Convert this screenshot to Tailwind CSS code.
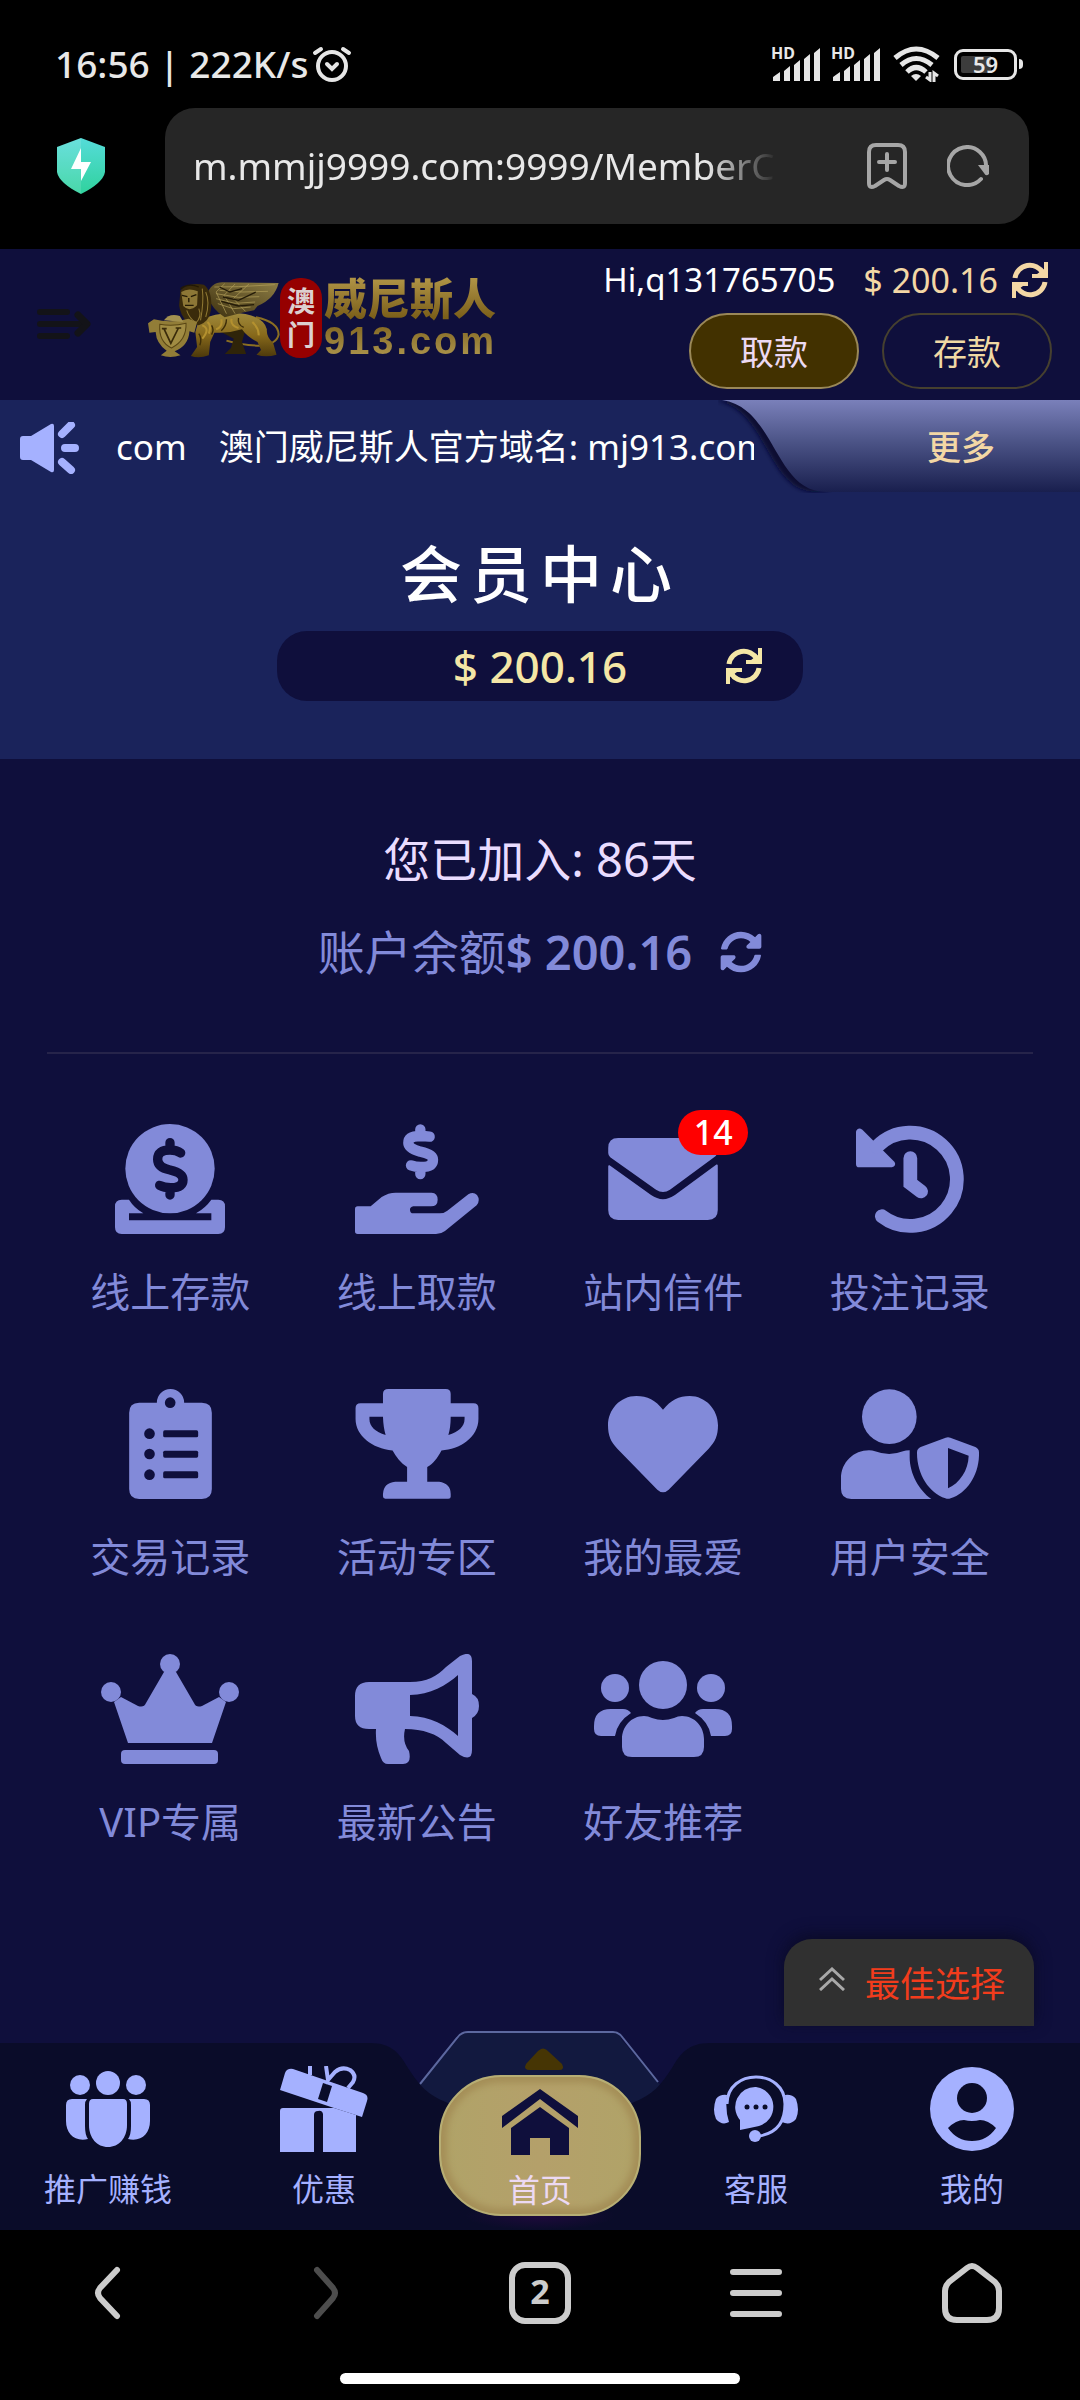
<!DOCTYPE html>
<html lang="zh-CN">
<head>
<meta charset="utf-8">
<meta name="viewport" content="width=device-width, initial-scale=1">
<title>会员中心</title>
<script src="https://cdn.jsdelivr.net/npm/@tailwindcss/browser@4"></script>
</head>
<body class="flex min-h-screen flex-col bg-[#0f0f3c] font-['Noto_Sans','Noto_Sans_CJK_SC',sans-serif] text-white">

<svg class="hidden" aria-hidden="true">
  <symbol id="sync-sharp" viewBox="0 0 36 36">
    <path d="M3 16A15 15 0 0 1 31 11M33 20A15 15 0 0 1 5 25" fill="none" stroke="currentColor" stroke-width="5"/>
    <path d="M32 0H36V16H20V12H25L32 7ZM4 36H0V20H16V24H11L4 29Z" fill="currentColor"/>
  </symbol>
  <symbol id="signal" viewBox="0 0 50 34">
    <path d="M2 34V30L9 25V34ZM13 34V24L19 19V34ZM23 34V18L29 13V34ZM33 34V12L39 7V34ZM43 34V6L49 1V34Z" fill="#e6e6e6"/>
  </symbol>
</svg>

<!-- Browser chrome: status bar and address bar -->
<header class="bg-black pb-[25px] text-[#e8e8e8]">
  <div class="flex items-center justify-between pt-9 pr-[57px] pb-4 pl-[55px]">
    <div class="flex items-center gap-1">
      <span class="text-[37px] leading-[56px] font-medium whitespace-nowrap">16:56 | 222K/s</span>
      <svg class="h-9 w-10" viewBox="0 0 40 36" fill="none" stroke="#e6e6e6" stroke-width="4" stroke-linecap="round"><circle cx="20" cy="20" r="14"/><path d="M15 18L20 23L25 18M3 7L9 3M37 7L31 3"/></svg>
    </div>
    <div class="flex items-center">
      <div class="relative mr-2.5 h-[34px] w-[50px]"><svg class="h-full w-full"><use href="#signal"/></svg><span class="absolute top-[-4px] left-0 text-base leading-5 font-bold">HD</span></div>
      <div class="relative mr-3 h-[34px] w-[50px]"><svg class="h-full w-full"><use href="#signal"/></svg><span class="absolute top-[-4px] left-0 text-base leading-5 font-bold">HD</span></div>
      <svg class="mr-3.5 h-9 w-[47px]" viewBox="0 0 47 36" fill="none" stroke="#e6e6e6" stroke-width="5"><path d="M2 12Q23 -6 45 12M8 19Q23 6 39 19M14 26Q23 17 33 26"/><path d="M18 30Q23 26 28 30L23 35Z" fill="#e6e6e6" stroke="none"/><path d="M37 26V34L33 31M41 36V27L45 30" stroke-width="3"/></svg>
      <div class="flex h-[31px] w-[63px] items-center justify-center rounded-[9px] border-3 border-[#e6e6e6] bg-linear-to-r from-[#3c3c3c] from-60% to-black to-60% bg-clip-content p-1 text-[22px] leading-[22px] font-semibold">59</div>
      <div class="ml-0.5 h-2.5 w-1 rounded-r bg-[#e6e6e6]"></div>
    </div>
  </div>
  <div class="flex items-center pr-[51px] pl-[57px]">
    <svg class="mr-[60px] h-14 w-12 shrink-0" viewBox="0 0 48 56">
      <defs><linearGradient id="shield" x1="0" y1="0" x2="0" y2="1"><stop offset="0" stop-color="#55dcd9"/><stop offset="1" stop-color="#30d29d"/></linearGradient></defs>
      <path d="M24 0L48 9V34Q46 45 24 56Q2 45 0 34V9Z" fill="url(#shield)"/>
      <path d="M24 0L0 9V34Q2 45 24 56Z" fill="#fff" opacity=".12"/>
      <path d="M24 10L14 31H24V43L34 24H24Z" fill="#fff"/>
    </svg>
    <div class="flex h-[116px] min-w-0 flex-1 items-center rounded-[30px] bg-[#262626] pr-10 pl-7">
      <input type="text" aria-label="网址" value="m.mmjj9999.com:9999/MemberCenter" class="mr-[90px] min-w-0 flex-1 bg-transparent text-[37px] leading-[60px] outline-none [mask-image:linear-gradient(to_right,#000_88%,transparent)]">
      <button type="button" aria-label="添加书签" class="mr-10"><svg class="h-[46px] w-10" viewBox="0 0 40 46" fill="none" stroke="#a6a6a6" stroke-width="4" stroke-linecap="round" stroke-linejoin="round"><path d="M9 2H31Q38 2 38 9V40Q38 46 32 43L23 37Q20 35 17 37L8 43Q2 46 2 40V9Q2 2 9 2ZM20 11V27M12 19H28"/></svg></button>
      <button type="button" aria-label="刷新"><svg class="h-[42px] w-[42px]" viewBox="0 0 42 42"><path d="M34 34A19 19 0 1 1 39 23" fill="none" stroke="#a6a6a6" stroke-width="4" stroke-linecap="round"/><path d="M31 20H42V29Q39 32 37 28Z" fill="#a6a6a6"/></svg></button>
    </div>
  </div>
</header>

<!-- Site header -->
<div class="flex items-start justify-between pr-7 pl-[37px]">
  <div class="flex items-start">
    <button type="button" aria-label="菜单" class="mt-[59px] mr-14"><svg class="h-8 w-[54px]" viewBox="0 0 54 32" fill="none" stroke="#131318" stroke-width="6" stroke-linecap="round" stroke-linejoin="round"><path d="M3 4H30M3 16H48M3 28H30"/><path d="M41 7L50 16L41 25" stroke-width="7"/></svg></button>
    <a href="#" aria-label="澳门威尼斯人 913.com" class="mt-[27px] flex items-center">
      <svg class="h-20 w-[133px]" viewBox="425 108 385 240" preserveAspectRatio="none">
        <defs>
          <linearGradient id="gold" x1="0" y1="0" x2="0" y2="1"><stop offset="0" stop-color="#a08a3c"/><stop offset=".5" stop-color="#87691b"/><stop offset="1" stop-color="#4c380b"/></linearGradient>
          <linearGradient id="wing" x1="1" y1="0" x2="0" y2="1"><stop offset="0" stop-color="#8d7d45"/><stop offset="1" stop-color="#3d300f"/></linearGradient>
        </defs>
        <path d="M740 226Q806 240 806 278Q800 308 750 311Q700 310 655 296" fill="none" stroke="#8b6f22" stroke-width="6"/>
        <path d="M655 240L715 245L700 300L712 336H650L668 318L676 290L640 270Z" fill="#2f2409"/>
        <path d="M575 235Q640 205 710 216Q765 228 772 262Q770 285 790 302L800 338Q770 348 742 338L755 324L745 300Q715 285 700 262Q660 275 620 272L608 300L604 340Q575 350 552 342L570 315L565 270Z" fill="url(#gold)"/>
        <path d="M598 160Q610 120 645 121L806 123Q795 170 745 192L735 205L700 212L650 226Q615 205 598 160Z" fill="url(#wing)"/>
        <path d="M620 135L690 134L795 128M635 145L700 150L775 148M625 155L690 166L750 164M625 170L680 184L738 180M630 185L675 200L725 195M650 125L625 150L655 215M680 126L648 160L680 215M720 126L675 170L710 208" fill="none" stroke="#b3a05a" stroke-width="2"/>
        <path d="M635 135L665 150L700 140M645 165L690 175L740 150M640 178L690 192L735 188" fill="none" stroke="#241b08" stroke-width="4"/>
        <path d="M522 145Q545 120 590 128Q616 150 610 205Q605 240 575 250L540 240Q520 215 518 190Z" fill="#3a2b0b"/>
        <path d="M540 205Q548 230 565 240M595 150Q608 180 595 225M585 140Q590 180 580 235M575 200Q585 225 565 245" stroke="#8f7833" stroke-width="3" fill="none"/>
        <path d="M524 150Q545 136 572 148L570 190Q548 212 530 192Z" fill="#8d7736"/>
        <path d="M526 160L542 164M552 164L568 158M535 190H560M546 168V181M522 140Q545 122 575 135" stroke="#221905" stroke-width="4" fill="none"/>
        <path d="M640 232Q645 255 625 262M670 230Q665 250 690 258M585 250Q610 260 585 290M600 240Q612 250 604 275M730 240Q750 260 748 280" stroke="#b4912f" stroke-width="6" fill="none"/>
        <path d="M655 232Q655 252 640 266M690 228Q686 248 705 256M612 250Q620 262 612 278M575 275Q585 290 578 310" stroke="#3d2d08" stroke-width="4" fill="none"/>
        <path d="M445 232Q495 245 545 230L570 240L562 272L548 268Q545 312 505 328L522 340Q492 350 465 340L482 326Q452 305 450 270L432 272L428 244Z" fill="#927d37"/>
        <path d="M462 247Q500 254 538 244Q540 295 496 318Q458 300 462 247Z" fill="#a18c43" stroke="#594614" stroke-width="3"/>
        <path d="M474 260L494 304L516 258M468 260H482M508 258H524" fill="none" stroke="#3a2b0a" stroke-width="5"/>
        <path d="M474 235Q490 212 520 222L530 240Z" fill="#a39150"/>
      </svg>
      <span class="flex h-20 w-[42px] flex-col items-center justify-center rounded-[20px] bg-[#960000] text-[28px] leading-[34px] font-bold text-[#dcd0d0]"><span>澳</span><span>门</span></span>
      <span class="ml-0.5 flex flex-col bg-linear-to-b from-[#b39748] via-[#7b5f19] to-[#b09950] bg-clip-text text-transparent">
        <span class="text-[43px] leading-[46px] font-black">威尼斯人</span>
        <span class="font-['Liberation_Sans',sans-serif] text-[38px] leading-[38px] font-bold tracking-[3px]">913.com</span>
      </span>
    </a>
  </div>
  <div class="flex flex-col items-end gap-2.5 pt-2 pb-[11px]">
    <div class="flex h-[46px] items-center pr-1 text-[34px] whitespace-nowrap">
      <span class="mr-7 text-[33px]">Hi,q131765705</span>
      <span class="mr-3.5 text-[#f3d7a5]">$ 200.16</span>
      <button type="button" aria-label="刷新余额" class="text-[#f3d7a5]"><svg class="h-9 w-9"><use href="#sync-sharp"/></svg></button>
    </div>
    <div class="flex gap-[23px] text-[34px]">
      <button type="button" class="h-[76px] w-[170px] rounded-full border-2 border-[#9a8858] bg-[#423100] pt-0.5 text-[#ecd9f3]">取款</button>
      <button type="button" class="h-[76px] w-[170px] rounded-full border-2 border-[#46402f] pt-0.5 text-[#f0d9a4]">存款</button>
    </div>
  </div>
</div>

<section class="bg-[#1a235b] pb-[58px]">
  <!-- Scrolling notice -->
  <div class="flex h-[93px] items-stretch">
    <div class="flex min-w-0 flex-1 items-center pt-0.5 pl-5">
      <svg class="mr-9 h-[52px] w-[60px] shrink-0" viewBox="0 0 60 52"><path d="M3 14H11L31 2Q34 1 34 4V48Q34 51 31 50L11 38H3Q0 38 0 35V17Q0 14 3 14Z" fill="#a5b1ff"/><path d="M42 12L51 3M45 26H55M42 40L51 48" stroke="#a5b1ff" stroke-width="8" stroke-linecap="round"/></svg>
      <div class="flex min-w-0 flex-1 gap-8 overflow-hidden text-[35px] whitespace-nowrap"><span>com</span><span>澳门威尼斯人官方域名: mj913.com</span></div>
    </div>
    <a href="#" class="relative -ml-9 flex w-[362px] items-center justify-end pt-0.5 pr-[85px] text-[34px] font-medium text-[#f3d7a5]">
      <svg class="absolute inset-0 h-full w-full" viewBox="0 0 362 93" preserveAspectRatio="none">
        <defs>
          <linearGradient id="more" x1="0" y1="0" x2="0" y2="1"><stop offset="0" stop-color="#7a80ba"/><stop offset=".45" stop-color="#4c5487"/><stop offset="1" stop-color="#191f4e"/></linearGradient>
          <filter id="soft" x="-10%" y="-10%" width="120%" height="120%"><feGaussianBlur stdDeviation="2"/></filter>
        </defs>
        <path d="M-4 0C50 8 48 90 96 92L112 91C78 70 66 8 10 0Z" fill="#080a30" filter="url(#soft)"/>
        <path d="M4 0C58 8 56 92 108 92H362V0Z" fill="url(#more)"/>
      </svg>
      <span class="relative">更多</span>
    </a>
  </div>
  <h1 class="mt-[41px] text-center text-[62px] leading-[80px] font-medium tracking-[8px]">会员中心</h1>
  <div class="mx-auto mt-[17px] grid h-[70px] w-[526px] grid-cols-[1fr_auto_1fr] items-center rounded-[30px] bg-[#0f0f3c] text-[44px] font-medium text-[#f4e6a6]">
    <span></span>
    <span class="leading-[60px]">$ 200.16</span>
    <button type="button" aria-label="刷新余额" class="mr-[41px] justify-self-end"><svg class="h-9 w-9"><use href="#sync-sharp"/></svg></button>
  </div>
</section>

<main class="flex flex-1 flex-col">
  <div class="mx-[47px] flex flex-col items-center gap-[33px] border-b-2 border-[#26244a] pt-[70px] pb-[70px] text-[47px] leading-[60px]">
    <p class="text-[#e9dcff]">您已加入: 86天</p>
    <p class="flex items-center text-[#828ad9]">账户余额<span class="font-semibold">$ 200.16</span>
      <button type="button" aria-label="刷新余额" class="ml-7"><svg class="h-[42px] w-[42px]" viewBox="0 0 512 512" fill="currentColor"><path d="M370.72 133.28C339.458 104.008 298.888 87.962 255.848 88c-77.458.068-144.328 53.178-162.791 126.85-1.344 5.363-6.122 9.15-11.651 9.15H24.103c-7.498 0-13.194-6.807-11.807-14.176C33.933 94.924 134.813 8 256 8c66.448 0 126.791 26.136 171.315 68.685L463.03 40.97C478.149 25.851 504 36.559 504 57.941V192c0 13.255-10.745 24-24 24H345.941c-21.382 0-32.09-25.851-16.971-40.971l41.75-41.749zM32 296h134.059c21.382 0 32.09 25.851 16.971 40.971l-41.75 41.75c31.262 29.273 71.835 45.319 114.876 45.28 77.418-.07 144.315-53.144 162.787-126.849 1.344-5.363 6.122-9.15 11.651-9.15h57.304c7.498 0 13.194 6.807 11.807 14.176C478.067 417.076 377.187 504 256 504c-66.448 0-126.791-26.136-171.315-68.685L48.97 471.03C33.851 486.149 8 475.441 8 454.059V320c0-13.255 10.745-24 24-24z"/></svg></button>
    </p>
  </div>

  <nav aria-label="会员功能" class="mx-[47px] mt-[70px] grid grid-cols-4 gap-y-[73px] text-center text-[40px] leading-[48px] text-[#828ad9]">
    <a href="#" class="flex flex-col items-center gap-[34px]">
      <svg class="h-[110px] w-[110px]" viewBox="165 101 330 330" fill="currentColor"><circle cx="330" cy="235" r="134"/><path d="M185 328H207Q222 352 250 369H207V390H454V369H408Q437 352 454 328H475Q495 328 495 348V411Q495 431 475 431H185Q165 431 165 411V348Q165 328 185 328Z"/><path d="M362 188Q350 179 330 179Q293 179 293 207Q293 232 330 239Q369 248 369 268Q369 292 332 292Q312 292 299 285M330 157V179M330 292V314" fill="none" stroke="#0f0f3c" stroke-width="28" stroke-linecap="round"/></svg>
      <span>线上存款</span></a>
    <a href="#" class="flex flex-col items-center gap-[34px]">
      <svg class="h-[110px] w-[124px]" viewBox="885 101 372 330" fill="currentColor"><path d="M893 348H932L965 320Q985 307 1007 307H1115Q1133 308 1133 328Q1133 348 1113 348H1060Q1050 350 1050 358Q1050 369 1060 369H1140Q1152 369 1162 361L1225 312Q1240 303 1251 314Q1262 330 1250 345L1155 422Q1143 431 1128 431H893Q885 431 885 423V356Q885 348 893 348Z"/><path d="M1109 139Q1098 138 1081 137Q1045 137 1045 158Q1045 174 1081 184Q1119 192 1119 208Q1119 230 1083 230Q1066 230 1053 225M1081 117V137M1081 230V251" fill="none" stroke="currentColor" stroke-width="31" stroke-linecap="round"/></svg>
      <span>线上取款</span></a>
    <a href="#" class="flex flex-col items-center gap-[34px]">
      <span class="relative flex h-[110px] items-center">
        <svg class="h-[82px] w-[110px]" viewBox="207 143 330 247" fill="currentColor"><path d="M237 143H507Q537 143 537 173V182Q537 193 530 198L393 299Q372 313 351 299L213 201Q207 195 207 188V173Q207 143 237 143ZM211 225L336 315Q372 340 408 315L533 223Q537 222 537 226V360Q537 390 507 390H237Q207 390 207 360V228Q207 224 211 225Z"/></svg>
        <span class="absolute -top-3.5 -right-[30px] flex h-[45px] w-[70px] items-center justify-center rounded-full bg-[#ff0000] text-[34px] leading-[45px] font-medium text-white">14</span>
      </span>
      <span>站内信件</span></a>
    <a href="#" class="flex flex-col items-center gap-[34px]">
      <svg class="h-[110px] w-[110px]" viewBox="948 101 328 328" fill="currentColor"><path d="M951 124Q957 108 970 118L1066 214Q1072 226 1058 230H960Q951 230 951 220Z"/><path d="M1028 376A139 139 0 1 0 1013 169M1113 203V278L1145 302" fill="none" stroke="currentColor" stroke-width="41" stroke-linecap="round"/></svg>
      <span>投注记录</span></a>

    <a href="#" class="flex flex-col items-center gap-[34px]">
      <svg class="h-[110px] w-[83px]" viewBox="207 896 248 330" fill="currentColor"><path d="M237 937H290A41 41 0 0 1 372 937H425q30 0 30 30V1196q0 30-30 30H237q-30 0-30-30V967q0-30 30-30Z"/><g fill="#0f0f3c"><circle cx="330" cy="937" r="16"/><circle cx="268" cy="1030" r="16"/><circle cx="268" cy="1091" r="16"/><circle cx="268" cy="1153" r="16"/><rect x="309" y="1020" width="105" height="21" rx="5"/><rect x="309" y="1081" width="105" height="21" rx="5"/><rect x="309" y="1143" width="105" height="21" rx="5"/></g></svg>
      <span>交易记录</span></a>
    <a href="#" class="flex flex-col items-center gap-[34px]">
      <svg class="h-[110px] w-[124px]" viewBox="885 894 372 333" fill="currentColor" fill-rule="evenodd"><path d="M984 894H1158Q1173 894 1173 909V937H1242Q1257 937 1257 952V985C1257 1040 1200 1078 1145 1080C1132 1105 1120 1120 1102 1130V1175H1138Q1173 1180 1173 1212V1220Q1173 1226 1166 1226H975Q968 1226 968 1219V1212Q970 1178 1005 1175H1041V1130C1022 1118 1008 1100 997 1080C935 1075 885 1035 885 985V952Q885 937 900 937H968V909Q968 894 984 894ZM927 978H968Q969 1010 976 1033C945 1024 927 1008 927 985ZM1173 978H1215V985C1215 1008 1197 1024 1166 1033Q1173 1010 1173 978Z"/></svg>
      <span>活动专区</span></a>
    <a href="#" class="flex flex-col items-center gap-[34px]">
      <svg class="h-[110px] w-[110px]" viewBox="207 896 330 330" fill="currentColor"><path d="M372 958C350 930 325 917 292 917C243 917 207 958 207 1005C207 1035 215 1055 235 1075L355 1198Q372 1214 389 1198L509 1075C529 1055 537 1035 537 1005C537 958 500 917 452 917C420 917 395 930 372 958Z"/></svg>
      <span>我的最爱</span></a>
    <a href="#" class="flex flex-col items-center gap-[34px]">
      <svg class="h-[110px] w-[138px]" viewBox="906 896 414 330" fill="currentColor" fill-rule="evenodd"><circle cx="1051" cy="979" r="82"/><path d="M990 1080Q1000 1080 1008 1083Q1051 1099 1092 1083Q1100 1080 1112 1080V1100C1112 1150 1140 1200 1177 1226H937Q906 1226 906 1196V1165C906 1115 945 1080 990 1080ZM1220 1042Q1227 1039 1234 1042L1309 1070Q1320 1075 1320 1086C1322 1150 1285 1208 1235 1224Q1227 1227 1219 1224C1170 1208 1133 1150 1134 1086Q1134 1075 1145 1070ZM1227 1073L1289 1096C1288 1140 1262 1178 1227 1194Z"/></svg>
      <span>用户安全</span></a>

    <a href="#" class="flex flex-col items-center gap-[34px]">
      <svg class="h-[110px] w-[138px]" viewBox="0 0 138 110" fill="currentColor"><circle cx="69" cy="10" r="10"/><circle cx="10" cy="38" r="10"/><circle cx="128" cy="38" r="10"/><path d="M63 18L45 49Q43 54 37 52L20 43L13 48L27 89H111L125 48L118 43L101 52Q95 54 93 49L75 18Z"/><rect x="20" y="96" width="97" height="14" rx="4"/></svg>
      <span>VIP专属</span></a>
    <a href="#" class="flex flex-col items-center gap-[34px]">
      <svg class="h-[110px] w-[124px]" viewBox="0 0 124 110" fill="currentColor" fill-rule="evenodd"><path d="M14 28H55C72 28 82 22 91 13L105 2Q117 -4 117 7V40Q124 43 124 52Q124 60 117 64V96Q117 108 105 101L91 89C82 80 68 75 50 75Q47 88 54 97Q57 110 48 110H33Q28 110 26 104Q20 90 21 75H14Q0 75 0 62V42Q0 28 14 28ZM55 41V62C75 62 92 72 103 82V21C92 31 75 41 55 41Z"/></svg>
      <span>最新公告</span></a>
    <a href="#" class="flex flex-col items-center gap-[34px]">
      <svg class="h-[110px] w-[138px]" viewBox="0 -7 138 110" fill="currentColor"><circle cx="69" cy="24" r="24"/><circle cx="21" cy="27" r="14"/><circle cx="117" cy="27" r="14"/><path d="M50 55Q54 55 58 57Q69 61 80 57Q84 55 88 55C101 55 110 66 110 78V86Q110 96 100 96H38Q28 96 28 86V78C28 66 37 55 50 55ZM17 48H29Q34 48 37 52Q23 61 21 75H7Q0 75 0 68V65Q0 48 17 48ZM121 48H109Q104 48 101 52Q115 61 117 75H131Q138 75 138 68V65Q138 48 121 48Z"/></svg>
      <span>好友推荐</span></a>
  </nav>

  <button type="button" class="mt-auto mr-[46px] mb-[17px] flex h-[87px] items-center gap-5 self-end rounded-t-[28px] bg-[#303030] pt-1 pr-[29px] pl-[35px] text-[35px] text-[#f23c1c] shadow-[0_-4px_16px_#0a0a26]">
    <svg class="mb-3 h-6 w-[26px]" viewBox="0 0 26 24" fill="none" stroke="#a8a8a8" stroke-width="3"><path d="M1 13L13 2L25 13M1 23L13 12L25 23"/></svg>
    最佳选择
  </button>
</main>

<!-- Site tab bar -->
<nav aria-label="主导航" class="relative h-[187px] text-[32px] leading-10 text-[#a5b1ff]">
  <div class="absolute inset-x-0 -top-[17px] bottom-0 flex items-end">
    <div class="h-[187px] flex-1 bg-[#0a0c29]"></div>
    <svg class="h-[204px] w-[340px]" viewBox="0 0 340 204">
      <defs><radialGradient id="glow"><stop offset="0" stop-color="#1e0a3c"/><stop offset="1" stop-color="#0a0c29"/></radialGradient></defs>
      <path d="M40 70L87 14Q92 6 100 6H242Q248 6 252 14L300 70L262 84H78Z" fill="#12193f"/>
      <path d="M50 58L87 12Q91 6 98 6H243Q249 6 253 12L288 56" fill="none" stroke="#5c689f" stroke-width="2"/>
      <path d="M0 17C22 17 30 28 38 42C50 60 56 68 78 77H262C284 68 290 60 302 42C310 28 318 17 340 17V204H0Z" fill="#0a0c29"/>
      <ellipse cx="170" cy="190" rx="75" ry="14" fill="url(#glow)"/>
      <path d="M171 23Q175 21 179 26L192 38Q195 44 189 44H160Q153 44 156 38L168 25Z" fill="#463504"/>
    </svg>
    <div class="h-[187px] flex-1 bg-[#0a0c29]"></div>
  </div>
  <div class="relative grid h-full grid-cols-5">
    <a href="#" class="flex flex-col items-center gap-[17px] pt-[23px]">
      <svg class="h-[86px] w-[84px]" viewBox="0 -5 84 86" fill="currentColor"><circle cx="14" cy="14" r="10"/><circle cx="42" cy="12" r="12"/><circle cx="70" cy="14" r="10"/><path d="M27 28H57Q61 28 61 33V54C61 67 53 76 42 76C31 76 23 67 23 54V33Q23 28 27 28ZM6 28H21Q19 30 19 34V55Q19 64 22 68C9 71 0 63 0 50V34Q0 28 6 28ZM78 28H63Q65 30 65 34V55Q65 64 62 68C75 71 84 63 84 50V34Q84 28 78 28Z"/></svg>
      推广赚钱</a>
    <a href="#" class="flex flex-col items-center gap-[17px] pt-[23px]">
      <svg class="h-[86px] w-[88px]" viewBox="0 0 88 86" fill="currentColor"><path d="M3 42H54L76 49V86H43V48Q42 44 38 45Q34 45 34 49V86H0V45Q0 42 3 42Z"/><path d="M0 24L5 7Q7 2 13 3L83 27Q89 29 87 35L82 51L54 42Z"/><path d="M43 17L52 20L47 36L38 33Z" fill="#0a0c29"/><path d="M30 0V9M46 0L48 14L55 6Q62 0 70 4Q77 9 73 16L68 22" fill="none" stroke="currentColor" stroke-width="4"/></svg>
      优惠</a>
    <a href="#" class="mx-auto mt-8 flex h-[141px] w-[202px] flex-col items-center rounded-[62px] border-2 border-[#b7ae74] bg-linear-to-r from-[#b0a368] via-[#b4a06a] to-[#b0a368] pt-3 text-[#ecd9f3] shadow-[inset_0_0_6px_6px_#a58f58]">
      <svg class="mb-[15px] h-[66px] w-[76px] shrink-0" viewBox="0 0 76 66" fill="#0f0f3c"><path d="M38 0L76 27V39L38 10L0 39V27ZM38 18L67 39V66H48V49H28V66H9V39Z"/></svg>
      首页</a>
    <a href="#" class="flex flex-col items-center gap-[17px] pt-[23px]">
      <svg class="h-[86px] w-[84px]" viewBox="0 -10 84 86" fill="currentColor"><path d="M13 28C13 -8 71 -8 71 28Q71 56 45 60" fill="none" stroke="currentColor" stroke-width="3"/><path d="M13 19Q6 18 2 23Q-2 34 2 43Q8 50 15 46Q11 34 13 19ZM71 19Q78 18 82 23Q86 34 82 43Q76 50 68 46Q73 34 71 19Z"/><path d="M42 11A20 20 0 0 1 45 50Q36 52 26 54V44A20 20 0 0 1 42 11Z"/><circle cx="41" cy="60" r="6"/><g fill="#0a0c29"><circle cx="33" cy="31" r="2.5"/><circle cx="42" cy="31" r="2.5"/><circle cx="51" cy="31" r="2.5"/></g></svg>
      客服</a>
    <a href="#" class="flex flex-col items-center gap-[17px] pt-[23px]">
      <svg class="h-[86px] w-[84px]" viewBox="0 -1 84 86" fill="currentColor"><circle cx="42" cy="42" r="42"/><g fill="#0a0c29"><circle cx="42" cy="31" r="15"/><path d="M18 61Q26 53 34 53Q42 55 50 53Q58 53 66 61Q57 74 42 74Q27 74 18 61Z"/></g></svg>
      我的</a>
  </div>
</nav>

<!-- Browser toolbar -->
<footer class="flex h-[170px] flex-col justify-between bg-black pt-8 pb-4">
  <div class="grid grid-cols-5 justify-items-center">
    <button type="button" aria-label="后退"><svg class="h-[62px] w-[62px]" viewBox="0 0 62 62" fill="none" stroke="#ccc" stroke-width="6" stroke-linecap="round"><path d="M40 8L23 26Q19 31 23 36L40 54"/></svg></button>
    <button type="button" aria-label="前进"><svg class="h-[62px] w-[62px]" viewBox="0 0 62 62" fill="none" stroke="#4d4d4d" stroke-width="6" stroke-linecap="round"><path d="M24 8L40 26Q44 31 40 36L24 54"/></svg></button>
    <button type="button" aria-label="标签页" class="flex h-[62px] w-[62px] items-center justify-center rounded-2xl border-6 border-[#ccc] pb-1 text-[34px] leading-[46px] font-bold text-[#ccc]">2</button>
    <button type="button" aria-label="更多选项"><svg class="h-[62px] w-[62px]" viewBox="0 0 62 62" stroke="#ccc" stroke-width="6" stroke-linecap="round"><path d="M8 10H54M8 31H54M8 52H54"/></svg></button>
    <button type="button" aria-label="主页"><svg class="h-[62px] w-[62px]" viewBox="0 0 62 62" fill="none" stroke="#ccc" stroke-width="6" stroke-linejoin="round"><path d="M26 6Q31 2 36 6L54 20Q58 24 58 29V46Q58 58 46 58H16Q4 58 4 46V29Q4 24 8 20Z"/></svg></button>
  </div>
  <div class="mx-auto h-[11px] w-[400px] rounded-full bg-white"></div>
</footer>
</body>
</html>
